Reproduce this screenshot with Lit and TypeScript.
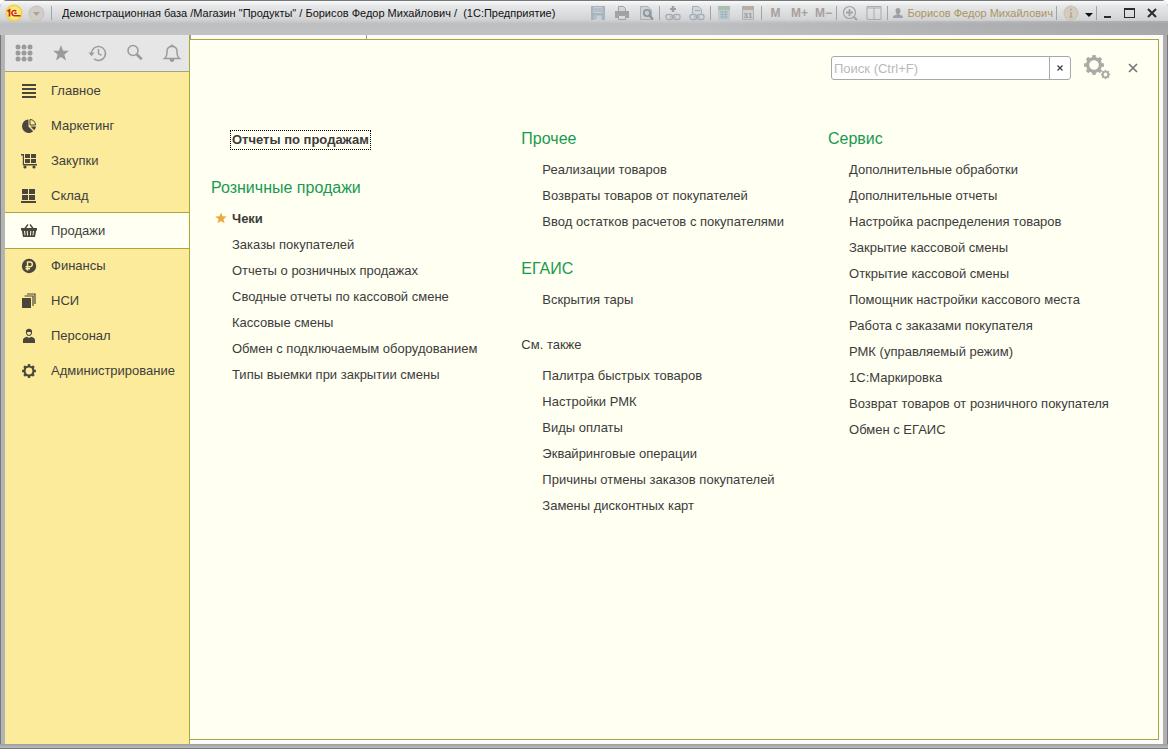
import { LitElement, html, css, svg, nothing } from "lit";
import { customElement, state } from "lit/decorators.js";

const GEAR_TEETH = [0, 45, 90, 135, 180, 225, 270, 315];

const gear = (cx: number, cy: number, r: number, w: number) => svg`
  <circle cx=${cx} cy=${cy} r=${r - w / 2} fill="none" stroke="currentColor" stroke-width=${w}/>
  ${GEAR_TEETH.map(
    (a) => svg`<rect x=${cx - w * 0.55} y=${cy - r - w * 0.6} width=${w * 1.1} height=${w} fill="currentColor" transform="rotate(${a} ${cx} ${cy})"/>`
  )}`;

const icon = (content: unknown, size = 16, box = 16) =>
  html`<svg width=${size} height=${size} viewBox="0 0 ${box} ${box}" fill="currentColor" aria-hidden="true">${content}</svg>`;

const sectionIcons: Record<string, unknown> = {
  main: svg`<path d="M1 1h14v2H1zM1 5h14v2H1zM1 9h14v2H1zM1 13h14v2H1z"/>`,
  pie: svg`<path d="M7.500 1.500V8.500l4.700 4.700A6.700 6.700 0 1 1 7.500 1.500z"/><path d="M9 1.500a5.500 5.500 0 0 1 5.500 5.500H9z" fill="none" stroke="currentColor"/><path d="M9.500 8.500H15a6.500 6.500 0 0 1-1.800 3.700z"/>`,
  cart: svg`<path d="M0 1h3v10h13v1.500H1.800V2.500H0zM4 1h5v4H4zM10 1h5v4h-5zM4 6h5v4H4zM10 6h5v4h-5z"/><circle cx="4" cy="14" r="1.600"/><circle cx="13" cy="14" r="1.600"/>`,
  stock: svg`<path d="M1 1h6v5H1zM8 1h6v5H8zM1 7h6v5H1zM8 7h6v5H8zM0 13h15v2H0z"/>`,
  basket: svg`<path d="M3.500 6 7 1.500M12.500 6 9 1.500" stroke="currentColor" stroke-width="1.300"/><path fill-rule="evenodd" d="M0 5h16v2.500h-.8L14 14H2L.8 7.500H0zM3 8l.7 4.500h.8L4 8zm2.700 0 .4 4.500h.9L6.700 8zm3.600 0L9 12.500h.9l.4-4.500zM12 8l-.5 4.500h.8L13 8z"/>`,
  ruble: svg`<circle cx="8" cy="8" r="7.200"/><path d="M6.500 12.500v-8.500h2.500a2.300 2.300 0 0 1 0 4.700H4.500M4.500 10.700h4.500" fill="none" stroke="#fbeb9b" stroke-width="1.400"/>`,
  docs: svg`<path d="M1 5h9v10H1z"/><path d="M3.500 3h8.500v10M6 1h8v10" fill="none" stroke="currentColor" stroke-width="1.200"/>`,
  person: svg`<path fill-rule="evenodd" d="M8 .8c2.300 0 3.300 1.400 3.100 3.500C11 6.600 9.800 8 8 8S5 6.600 4.900 4.300C4.700 2.200 5.700.8 8 .8zM6 4.300C6 6 6.900 7 8 7s2-1 2-2.700C8.700 4 7.500 3.700 6 4.300z"/><path d="M2 15v-3c0-1.700 1.600-2.700 4-3.200l2 1.300 2-1.300c2.400.5 4 1.500 4 3.200v3z"/>`,
  gear: gear(8, 8, 5.6, 2.2),
};

const SECTIONS = [
  ["main", "Главное"],
  ["pie", "Маркетинг"],
  ["cart", "Закупки"],
  ["stock", "Склад"],
  ["basket", "Продажи"],
  ["ruble", "Финансы"],
  ["docs", "НСИ"],
  ["person", "Персонал"],
  ["gear", "Администрирование"],
];

const STAR = "M8 .5l2 5.300 5.600.2-4.400 3.500 1.500 5.500L8 11.900 3.300 15l1.500-5.500L.4 6 6 5.800z";

const toolIcons: [string, unknown][] = [
  ["Меню функций", svg`${[4, 10, 16].map((y) => [4, 10, 16].map((x) => svg`<circle cx=${x} cy=${y} r="2.500"/>`))}`],
  ["Избранное", svg`<path d=${STAR} transform="translate(1.500 1.500) scale(1.060)"/>`],
  ["История", svg`<path d="M3.500 10.500A7 7 0 1 1 6 15.800" fill="none" stroke="currentColor" stroke-width="1.500"/><path d="M.5 9.500h6l-3 3.800z"/><path d="M10.500 6v4.500l3 2" fill="none" stroke="currentColor" stroke-width="1.500"/>`],
  ["Поиск", svg`<circle cx="8" cy="7.500" r="5" fill="none" stroke="currentColor" stroke-width="1.500"/><path d="M11.800 11.500l5 4.800" stroke="currentColor" stroke-width="2.600"/>`],
  ["Оповещения", svg`<path d="M2.500 15.500h15c-2-1.500-2.500-3-2.500-7C15 5.300 13 3.500 10 3.500S5 5.300 5 8.500c0 4-.5 5.500-2.500 7z" fill="none" stroke="currentColor" stroke-width="1.500"/><path d="M8.500 3.500a1.500 1.500 0 0 1 3 0M8 16.500a2 2 0 0 0 4 0z" stroke="currentColor"/>`],
];

const printer = svg`<path d="M4.500 1.500h5l2 2V7h-7z" fill="#d2d6d9" stroke="currentColor"/><path d="M1 6h14v7h-3v-3H4v3H1z"/><path d="M4.500 10.500h7v4h-7z" fill="#d9dcde" stroke="currentColor"/>`;
const links = svg`<rect x="1" y="9.500" width="6.500" height="5" rx="2" fill="none" stroke="#a4acb8" stroke-width="1.300"/><rect x="8.500" y="9.500" width="6.500" height="5" rx="2" fill="none" stroke="#a4acb8" stroke-width="1.300"/><path d="M4.500 12h7" stroke="#a4acb8"/>`;
const barItems: [string, unknown][][] = [
  [
    ["Сохранить", svg`<path d="M1 1h14v14H1z" fill="#a9b3bf"/><path d="M3.500 2h9v6h-9zM4.500 10.500h7V15h-7z" fill="#c9d0d8"/><path d="M4 4h8M4 6h8M6 11v3" stroke="#a0acba"/>`],
    ["Печать", printer],
    ["Просмотр", svg`<path d="M2.500 1.500H10l3.500 3.500v9.500h-11z" fill="#cfd2d5" stroke="#abb0b4"/><circle cx="9" cy="8" r="3.200" fill="#c4ccd2" stroke="#8a9298" stroke-width="1.600"/><path d="M11.500 10.500l3.500 4" stroke="#8a9298" stroke-width="2"/>`],
  ],
  [
    ["Перейти по ссылке", svg`<path d="M8 1v6" stroke="#a09f98" stroke-width="2.500"/><path d="M5 4h6" stroke="#a09f98" stroke-width="2"/>${links}`],
    ["Получить ссылку", svg`<path d="M3.500 8.500v-7h6l3 3v4" fill="#d3d6d9" stroke="#a4acb4"/>${links}<path d="M6 5.500h5" stroke="#a0a8b2"/>`],
  ],
  [
    ["Калькулятор", svg`<path d="M2 1h12v14H2z" fill="#c0cbd0"/><path d="M2 1h12v4H2z" fill="#a8bfb2"/><path d="M4 7h8M4 9.500h8M4 12h8M6 6v8M9.500 6v8" stroke="#a0b1bd"/>`],
    ["Календарь", svg`<path d="M2.500 2.500h11v12h-11z" fill="#cfd1d2" stroke="#b0b0b0"/><path d="M2 1h12v4H2z" fill="#b9aea6"/><text x="8" y="13" text-anchor="middle" font-size="8" font-weight="700" fill="#999">31</text>`],
  ],
  [
    ["M", nothing],
    ["M+", nothing],
    ["M−", nothing],
  ],
  [
    ["Масштаб", svg`<circle cx="7.500" cy="7.500" r="6" fill="none" stroke="currentColor" stroke-width="1.200"/><path d="M7.500 4v7M4 7.500h7M12 12l3 3" stroke="currentColor" stroke-width="1.800"/>`],
    ["Панели", svg`<path d="M1 1.500h14v13H1zM8 3v11M1 3h14" fill="none" stroke="#a5acb2"/>`],
  ],
];

interface Group {
  title: string;
  plain?: boolean;
  items: string[];
}

const COLUMNS: Group[][] = [
  [
    {
      title: "Розничные продажи",
      items: [
        "Чеки",
        "Заказы покупателей",
        "Отчеты о розничных продажах",
        "Сводные отчеты по кассовой смене",
        "Кассовые смены",
        "Обмен с подключаемым оборудованием",
        "Типы выемки при закрытии смены",
      ],
    },
  ],
  [
    { title: "Прочее", items: ["Реализации товаров", "Возвраты товаров от покупателей", "Ввод остатков расчетов с покупателями"] },
    { title: "ЕГАИС", items: ["Вскрытия тары"] },
    {
      title: "См. также",
      plain: true,
      items: [
        "Палитра быстрых товаров",
        "Настройки РМК",
        "Виды оплаты",
        "Эквайринговые операции",
        "Причины отмены заказов покупателей",
        "Замены дисконтных карт",
      ],
    },
  ],
  [
    {
      title: "Сервис",
      items: [
        "Дополнительные обработки",
        "Дополнительные отчеты",
        "Настройка распределения товаров",
        "Закрытие кассовой смены",
        "Открытие кассовой смены",
        "Помощник настройки кассового места",
        "Работа с заказами покупателя",
        "РМК (управляемый режим)",
        "1С:Маркировка",
        "Возврат товаров от розничного покупателя",
        "Обмен с ЕГАИС",
      ],
    },
  ],
];

const reset = css`
  :host, * { box-sizing: border-box; }
  button {
    display: flex;
    align-items: center;
    justify-content: center;
    margin: 0;
    padding: 0;
    border: 0;
    background: none;
    color: inherit;
    font: inherit;
    white-space: nowrap;
  }
  a { color: inherit; text-decoration: none; white-space: nowrap; }
  svg { display: block; flex: none; }
`;

@customElement("title-bar")
class TitleBar extends LitElement {
  static styles = [
    reset,
    css`
      :host {
        display: block;
        height: 35px;
        border-top: 1px solid #77787a;
        background: linear-gradient(90deg, #0000 60%, #0002 100%) bottom / 100% 14px no-repeat,
          linear-gradient(#fafafa 0, #e6e7e8 5px, #d4d5d7 18px, #bdbec0 23px, #c2c3c5 100%);
        font-size: 11px;
        color: #111;
      }
      .bar { display: flex; align-items: center; height: 24px; padding: 0 5px; }
      .logo { width: 18px; height: 18px; }
      .drop { width: 17px; height: 17px; margin-left: 5px; }
      .sep { width: 1px; height: 14px; background: #a3a4a8; }
      .left { margin-left: 6px; }
      .title { flex: 1; margin: 0 0 0 10px; font-size: 11px; font-weight: 400; white-space: nowrap; overflow: hidden; }
      .group { display: flex; align-items: center; padding: 0 1px; color: #a0a3a6; }
      .group button { width: 24px; height: 18px; }
      .memory { color: #a8a09c; font-size: 12px; font-weight: 700; }
      .user { gap: 4px; padding: 0 3px 0 5px; color: #ab9560; }
      .user svg { color: #a0a0a4; }
      .info { width: 22px; margin-left: 3px; }
      .menu { width: 14px; padding-top: 4px; }
      .window { width: 22px; height: 20px; color: #2c2c2c; }
    `,
  ];

  render() {
    return html`
      <div class="bar">
        <svg class="logo" viewBox="0 0 18 18">
          <defs><radialGradient id="y"><stop offset="0" stop-color="#fffcae"/><stop offset=".7" stop-color="#fbea70"/><stop offset="1" stop-color="#eec83c"/></radialGradient></defs>
          <circle cx="9" cy="9" r="8.500" fill="url(#y)"/>
          <path d="M2.500 7.300 4.500 6v6.500" fill="none" stroke="#c8281a" stroke-width="1.800"/>
          <path d="M11.300 7.300A2.600 2.600 0 1 0 9.300 11.700H15.500" fill="none" stroke="#c8281a" stroke-width="1.600"/>
          <path d="M9.200 9.300h2.500" stroke="#c8281a" stroke-width="1.400"/>
        </svg>
        <button class="drop" aria-label="Главное меню">
          <svg width="17" height="17" viewBox="0 0 17 17"><circle cx="8.500" cy="8.500" r="7.500" fill="#d2cdc6" stroke="#c6c0ba"/><path d="M5 7h7l-3.500 4z" fill="#aaa398"/></svg>
        </button>
        <span class="sep left"></span>
        <h1 class="title">Демонстрационная база /Магазин "Продукты" / Борисов Федор Михайлович /&nbsp; (1С:Предприятие)</h1>
        ${barItems.map(
          (group, i) => html`
            ${i ? html`<span class="sep"></span>` : nothing}
            <div class="group">
              ${group.map(([name, art]) =>
                art === nothing
                  ? html`<button class="memory">${name}</button>`
                  : html`<button aria-label=${name}>${icon(art)}</button>`
              )}
            </div>
          `
        )}
        <span class="sep"></span>
        <button class="user">
          ${icon(svg`<path d="M6 0c2 0 3 1.400 3 3.300C9 5 8 6.500 7.600 7v1c2 .4 4.400 1 4.400 3v1H0v-1c0-2 2.400-2.600 4.400-3V7C4 6.500 3 5 3 3.300 3 1.400 4 0 6 0z"/>`, 10, 12)}
          <span>Борисов Федор Михайлович</span>
        </button>
        <span class="sep"></span>
        <button class="info" aria-label="О программе">
          ${icon(svg`<circle cx="8" cy="8" r="7" fill="#d3ccc0" stroke="#c8bfb0"/><circle cx="8" cy="4.500" r="1" fill="#b8a98c"/><path d="M8 7v5M6.500 12h3" stroke="#b8a98c" stroke-width="1.500"/>`)}
        </button>
        <button class="menu" aria-label="Ещё">${icon(svg`<path d="M0 2h8L4 6z"/>`, 8, 8)}</button>
        <span class="sep"></span>
        <button class="window" aria-label="Свернуть">${icon(svg`<path d="M2 9h7v2H2z"/>`, 12, 12)}</button>
        <button class="window" aria-label="Развернуть">${icon(svg`<path fill-rule="evenodd" d="M0 1h11v10H0zM1 3v7h9V3z"/>`, 12, 12)}</button>
        <button class="window" aria-label="Закрыть">${icon(svg`<path d="M2 2l8 8M10 2l-8 8" stroke="currentColor" stroke-width="2"/>`, 12, 12)}</button>
      </div>
    `;
  }
}

@customElement("section-panel")
class SectionPanel extends LitElement {
  @state() private current = "basket";

  static styles = [
    reset,
    css`
      :host {
        display: flex;
        flex-direction: column;
        flex: none;
        width: 185px;
        border-right: 1px solid #a9a63a;
        background: #fbeb9b;
        font-size: 13px;
        color: #40403c;
      }
      .tools {
        display: grid;
        grid-template-columns: repeat(5, 37px);
        height: 37px;
        border-bottom: 1px solid #a9a37c;
        background: #e6e6e6;
        color: #9b9b9b;
      }
      .sections { display: flex; flex-direction: column; padding-top: 1px; }
      .section {
        display: flex;
        align-items: center;
        gap: 14px;
        height: 35px;
        padding-left: 16px;
      }
      .section svg { color: #4b463c; }
      .current {
        height: 37px;
        margin: -1px 0;
        border: solid #a9a63a;
        border-width: 1px 0;
        background: #fffff2;
      }
    `,
  ];

  render() {
    return html`
      <div class="tools">
        ${toolIcons.map(([name, art]) => html`<button aria-label=${name}>${icon(art, 20, 20)}</button>`)}
      </div>
      <nav class="sections">
        ${SECTIONS.map(
          ([id, name]) => html`
            <a class="section ${id === this.current ? "current" : ""}" href="#${id}" @click=${() => (this.current = id)}>
              ${icon(sectionIcons[id])}<span>${name}</span>
            </a>
          `
        )}
      </nav>
    `;
  }
}

@customElement("function-menu")
class FunctionMenu extends LitElement {
  static styles = [
    reset,
    css`
      :host {
        display: block;
        flex: 1;
        border: 1px solid #a9a63a;
        border-left: 0;
        background: #fffff2;
        font-size: 13px;
        color: #3c3c3c;
      }
      .head {
        display: flex;
        align-items: center;
        justify-content: flex-end;
        height: 80px;
        padding: 0 17px 24px 0;
      }
      .search {
        display: flex;
        width: 240px;
        height: 24px;
        border: 1px solid #a8a8a8;
        border-radius: 3px;
        background: #fff;
      }
      .search input {
        flex: 1;
        min-width: 0;
        padding: 0 2px;
        border: 0;
        outline: 0;
        background: none;
        font: inherit;
      }
      .search input::placeholder { color: #b9b9b9; opacity: 1; }
      .clear { width: 21px; border-left: 1px solid #a8a8a8; }
      .gears { width: 28px; height: 28px; margin-left: 12px; color: #aaaaa6; }
      .close { width: 16px; height: 16px; margin-left: 14px; color: #777; }
      .columns { display: flex; gap: 44px; padding: 0 21px; }
      .column { display: flex; flex-direction: column; gap: 16px; }
      .first { padding-top: 7px; }
      .lead { display: flex; align-items: center; height: 26px; padding-left: 19px; font-weight: 700; }
      .focus { padding: 0 1px; border: 1px dotted #000; line-height: 18px; }
      .title { height: 36px; margin: 0; font-size: 16px; font-weight: 400; line-height: 38px; color: #189a50; }
      .plain { height: 34px; font-size: 13px; line-height: 34px; color: inherit; }
      .list { margin: 0; padding: 0 0 0 21px; list-style: none; }
      .item { display: flex; align-items: center; height: 26px; }
      .marked { gap: 5px; margin-left: -17px; font-weight: 700; }
      .marked svg { color: #eca83c; }
    `,
  ];

  private item(name: string) {
    const marked = name === "Чеки";
    return html`
      <li class="item ${marked ? "marked" : ""}">
        ${marked ? icon(svg`<path d=${STAR}/>`, 12) : nothing}<a href="#">${name}</a>
      </li>
    `;
  }

  render() {
    return html`
      <div class="head">
        <div class="search">
          <input type="text" placeholder="Поиск (Ctrl+F)" aria-label="Поиск" />
          <button class="clear" aria-label="Очистить">${icon(svg`<path d="M1.500 1.500l5 5M6.500 1.500l-5 5" stroke="currentColor" stroke-width="1.200"/>`, 8, 8)}</button>
        </div>
        <button class="gears" aria-label="Настройка">${icon([gear(11, 11, 8, 3.2), gear(22.5, 20.5, 3.6, 1.7)], 28, 28)}</button>
        <button class="close" aria-label="Закрыть">${icon(svg`<path d="M1 1l8 8M9 1l-8 8" stroke="currentColor" stroke-width="1.700"/>`, 10, 10)}</button>
      </div>
      <div class="columns">
        ${COLUMNS.map(
          (groups, i) => html`
            <div class="column ${i ? "" : "first"}">
              ${i ? nothing : html`<div class="lead"><a class="focus" href="#">Отчеты по продажам</a></div>`}
              ${groups.map(
                (g) => html`
                  <section>
                    <h2 class="title ${g.plain ? "plain" : ""}">${g.title}</h2>
                    <ul class="list">${g.items.map((n) => this.item(n))}</ul>
                  </section>
                `
              )}
            </div>
          `
        )}
      </div>
    `;
  }
}

@customElement("app-root")
class AppRoot extends LitElement {
  static styles = css`
    :host {
      display: flex;
      flex-direction: column;
      box-sizing: border-box;
      height: 100vh;
      overflow: hidden;
      border-radius: 7px 7px 0 0;
      background: linear-gradient(90deg, #77787a 1px, #b4b4b5 1px, #b0b0b2 calc(100% - 1px), #77787a calc(100% - 1px));
      font-family: "Liberation Sans", Arial, sans-serif;
    }
    .body {
      display: flex;
      flex: 1;
      min-height: 0;
      margin: 0 5px;
      background: #fbfbf9;
    }
    .work { display: flex; flex: 1; min-width: 0; padding: 0 4px 4px 0; flex-direction: column; }
    .tabs { width: 175px; height: 4px; border: solid #999; border-width: 0 1px; }
    .frame { flex: none; height: 4px; border-bottom: 1px solid #77787a; background: linear-gradient(#9b9c9d, #bcbdbe); }
  `;

  render() {
    return html`
      <title-bar></title-bar>
      <div class="body">
        <section-panel></section-panel>
        <main class="work">
          <div class="tabs"></div>
          <function-menu></function-menu>
        </main>
      </div>
      <div class="frame"></div>
    `;
  }
}
